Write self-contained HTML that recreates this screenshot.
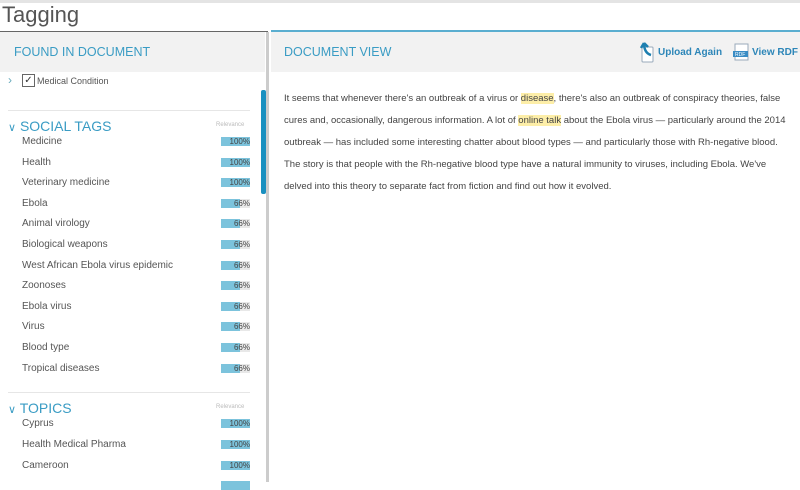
<!DOCTYPE html>
<html><head><style>
body{margin:0;width:800px;height:482px;overflow:hidden;background:#fff;font-family:"Liberation Sans",sans-serif;position:relative}
.a{position:absolute}
.row{position:absolute;left:22px;font-size:10px;color:#555}
.bar{position:absolute;left:221px;width:29px;height:9px;background:#e8e8e8;font-size:8px;color:#444;text-align:right;line-height:9px}
.bar i{position:absolute;left:0;top:0;bottom:0;background:#7cc3dc}
.bar span{position:relative}
.h{position:absolute;left:8px;font-size:14px;color:#3a9cc4}
.rel{position:absolute;left:216px;font-size:6px;color:#bbb}
</style></head><body>
<div class="a" style="left:0;top:0;width:800px;height:3px;background:#e4e4e4"></div>
<div class="a" style="left:2px;top:2px;font-size:22px;color:#555">Tagging</div>
<div class="a" style="left:0;top:31px;width:268px;height:451px;border-top:1px solid #666;"></div>
<div class="a" style="left:0;top:32px;width:265px;height:40px;background:#f2f2f2"></div>
<div class="a" style="left:14px;top:45px;font-size:12.5px;color:#3a9cc4">FOUND IN DOCUMENT</div>
<div class="a" style="left:266px;top:32px;width:3px;height:450px;background:#ccc"></div>
<div class="a" style="left:261px;top:90px;width:5px;height:104px;background:#1a90c0;border-radius:2px"></div>
<div class="a" style="left:271px;top:30px;width:529px;height:2px;background:#5aaed0"></div>
<div class="a" style="left:271px;top:32px;width:529px;height:40px;background:#f2f2f2"></div>
<div class="a" style="left:284px;top:45px;font-size:12.5px;color:#3a9cc4">DOCUMENT VIEW</div>
<svg class="a" style="left:638px;top:40px" width="18" height="24"><rect x="4" y="7" width="11" height="15" fill="#fff" stroke="#9ab" rx="1"/><path d="M6 3 L10 7 M6 3 L3 8 M6 3 Q6 13 13 15" stroke="#1d7fb0" stroke-width="2.5" fill="none"/></svg>
<div class="a" style="left:658px;top:47px;font-size:10px;color:#2d86b8;font-weight:bold">Upload Again</div>
<svg class="a" style="left:732px;top:43px" width="18" height="18"><rect x="3" y="1" width="13" height="16" fill="#fff" stroke="#9ab"/><rect x="1" y="8" width="15" height="6" fill="#3a8cc4"/><text x="3" y="13" font-size="5" fill="#fff" font-family="Liberation Sans">RDF</text></svg>
<div class="a" style="left:752px;top:47px;font-size:10px;color:#2d86b8;font-weight:bold">View RDF</div>
<div class="a" style="left:284px;top:88px;width:514px;font-size:9.5px;line-height:22px;color:#444">It seems that whenever there's an outbreak of a virus or <span style="background:#fdeea8">disease</span>, there's also an outbreak of conspiracy theories, false<br>cures and, occasionally, dangerous information. A lot of <span style="background:#fdeea8">online talk</span> about the Ebola virus — particularly around the 2014<br>outbreak — has included some interesting chatter about blood types — and particularly those with Rh-negative blood.<br>The story is that people with the Rh-negative blood type have a natural immunity to viruses, including Ebola. We've<br>delved into this theory to separate fact from fiction and find out how it evolved.</div>
<div class="a" style="left:8px;top:73px;font-size:12px;color:#6ab">›</div>
<div class="a" style="left:22px;top:74px;width:11px;height:11px;border:1px solid #666;font-size:10px;line-height:11px;text-align:center;color:#333">✓</div>
<div class="row" style="left:37px;top:76px;font-size:9px">Medical Condition</div>
<div class="a" style="left:8px;top:110px;width:242px;height:1px;background:#e6e6e6"></div>
<div class="h" style="top:118px"><span style="font-size:11px">∨</span> SOCIAL TAGS</div>
<div class="rel" style="top:122px">Relevance</div>
<div class="a" style="left:8px;top:392px;width:242px;height:1px;background:#e6e6e6"></div>
<div class="h" style="top:400px"><span style="font-size:11px">∨</span> TOPICS</div>
<div class="rel" style="top:404px">Relevance</div>
<div id="rows"></div>
<script>
var t=[["Medicine",100],["Health",100],["Veterinary medicine",100],["Ebola",66],["Animal virology",66],["Biological weapons",66],["West African Ebola virus epidemic",66],["Zoonoses",66],["Ebola virus",66],["Virus",66],["Blood type",66],["Tropical diseases",66]];
var h="";
t.forEach(function(r,i){var y=136+i*20.6;h+='<div class="row" style="top:'+y+'px">'+r[0]+'</div><div class="bar" style="top:'+(y+1)+'px"><i style="width:'+r[1]+'%"></i><span>'+r[1]+'%</span></div>';});
[["Cyprus",100],["Health Medical Pharma",100],["Cameroon",100],["",100]].forEach(function(r,i){var y=418+i*20.8;h+='<div class="row" style="top:'+y+'px">'+r[0]+'</div><div class="bar" style="top:'+(y+1)+'px"><i style="width:'+r[1]+'%"></i><span>'+(r[0]?r[1]+'%':'')+'</span></div>';});
document.getElementById("rows").innerHTML=h;
</script>
</body></html>
